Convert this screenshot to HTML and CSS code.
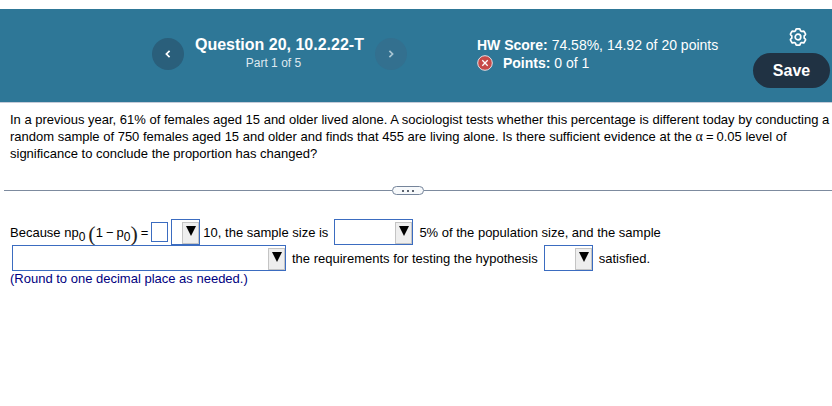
FILE: index.html
```html
<!DOCTYPE html>
<html lang="en">
<head>
    <meta charset="UTF-8">
    <meta name="viewport" content="width=device-width, initial-scale=1.0">
    <title>Question 20, 10.2.22-T</title>
    <link rel="stylesheet" href="styles.css">
</head>
<body>
    <header class="header">
        <nav class="question-nav">
            <button class="round-btn" type="button" aria-label="Previous question">
                <svg width="8" height="10" viewBox="0 0 8 10"><path d="M5.6 1.8 2.4 5l3.2 3.2" fill="none" stroke="currentColor" stroke-width="1.7"/></svg>
            </button>
            <div class="question-title">
                <h1>Question 20, 10.2.22-T</h1>
                <p>Part 1 of 5</p>
            </div>
            <button class="round-btn next" type="button" aria-label="Next question">
                <svg width="8" height="10" viewBox="0 0 8 10"><path d="M2.4 1.8 5.6 5 2.4 8.2" fill="none" stroke="currentColor" stroke-width="1.7"/></svg>
            </button>
        </nav>
        <div class="score">
            <p><b>HW Score:</b> 74.58%, 14.92 of 20 points</p>
            <p class="points">
                <svg width="16" height="16" viewBox="0 0 16 16">
                    <circle cx="8" cy="8" r="7.3" fill="#c74a48" stroke="#e6dfe4" stroke-width="1"/>
                    <path d="M5.3 5.3l5.4 5.4M10.7 5.3l-5.4 5.4" stroke="#fff" stroke-width="1.3"/>
                </svg>
                <span><b>Points:</b> 0 of 1</span>
            </p>
        </div>
        <div class="tools">
            <button class="settings" type="button" aria-label="Settings">
                <svg width="20" height="20" viewBox="0 0 20 20" fill="none" stroke="#fff" stroke-width="1.7" stroke-linejoin="round">
                    <path d="M8.6 1.8h2.8q.5 0 .7.6l.4 1.4 1.2.7 1.5-.4q.6-.1.9.4l1.4 2.4q.2.5-.2.9l-1.1 1v2.4l1.1 1q.4.4.2.9l-1.4 2.4q-.3.5-.9.4l-1.5-.4-1.2.7-.4 1.4q-.2.6-.7.6H8.6q-.5 0-.7-.6l-.4-1.4-1.2-.7-1.5.4q-.6.1-.9-.4l-1.4-2.4q-.2-.5.2-.9l1.1-1V8.800l-1.100-1q-.4-.4-.2-.9l1.400-2.400q.3-.5.9-.4l1.500.4 1.200-.7.4-1.400q.2-.6.7-.6z"/>
                    <circle cx="10" cy="10" r="2.8"/>
                </svg>
            </button>
            <button class="save" type="button">Save</button>
        </div>
    </header>

    <main>
        <p class="question">In a previous year, 61% of females aged 15 and older lived alone. A sociologist tests whether this percentage is different today by conducting a random sample of 750 females aged 15 and older and finds that 455 are living alone. Is there sufficient evidence at the <span class="alpha">α</span><span class="op">=</span>0.05 level of significance to conclude the proportion has changed?</p>

        <div class="divider">
            <button class="more" type="button" aria-label="Resize"><i></i><i></i><i></i></button>
        </div>

        <form class="answer">
            <div class="row">
                <div class="formula">
                    <span>Because np<sub>0</sub></span>
                    <span class="group"><span class="paren">(</span><span>1<span class="op">−</span>p<sub>0</sub></span><span class="paren">)</span></span>
                    <span>=</span>
                    <input class="value" type="text" aria-label="Value">
                    <span class="drop compare"><select aria-label="Comparison"><option></option></select></span>
                    <span>10, the sample size is</span>
                </div>
                <span class="drop size"><select aria-label="Sample size"><option></option></select></span>
                <span>5% of the population size, and the sample</span>
            </div>
            <div class="row">
                <span class="drop method"><select aria-label="Sampling method"><option></option></select></span>
                <span>the requirements for testing the hypothesis</span>
                <span class="drop verdict"><select aria-label="Requirements"><option></option></select></span>
                <span>satisfied.</span>
            </div>
            <p class="hint">(Round to one decimal place as needed.)</p>
        </form>
    </main>
</body>
</html>
```
FILE: styles.css
```css
* {
    box-sizing: border-box;
}

body {
    margin: 0;
    padding-top: 9px;
    background-color: #fff;
    color: #000;
    font-family: "Liberation Sans", Arial, sans-serif;
    font-size: 13px;
    line-height: 17px;
}

h1, p {
    margin: 0;
}

button {
    padding: 0;
    border: none;
    font-family: inherit;
    cursor: pointer;
}

svg {
    display: block;
}

.header {
    display: flex;
    align-items: flex-start;
    padding: 18px 2px 14px 152px;
    background-color: #2e7797;
    border-bottom: 1px solid #c5cbd8;
    color: #fff;
}

.question-nav {
    display: flex;
    align-items: center;
    gap: 11px;
    padding-top: 9px;
    margin-right: 70px;
}

.round-btn {
    display: flex;
    align-items: center;
    justify-content: center;
    width: 32px;
    height: 32px;
    border-radius: 50%;
    background-color: #2a5f7b;
    color: #fff;
}

.round-btn.next {
    background-color: #33708f;
    color: #a9c6d4;
}

.question-title {
    text-align: center;
    white-space: nowrap;
}

.question-title h1 {
    font-size: 16px;
    line-height: 18px;
}

.question-title p {
    padding-right: 12px;
    color: #dfe9f0;
    font-size: 12px;
    line-height: 18px;
}

.score {
    padding-top: 9px;
    font-size: 14px;
    line-height: 18px;
    white-space: nowrap;
}

.points {
    display: flex;
    align-items: center;
    gap: 10px;
}

.tools {
    display: flex;
    flex-direction: column;
    align-items: flex-end;
    gap: 6px;
    margin-left: auto;
}

.settings {
    margin-right: 22px;
    background: none;
}

.save {
    width: 77px;
    height: 35px;
    border-radius: 18px;
    background-color: #203243;
    color: #fff;
    font-size: 16px;
    font-weight: bold;
}

.question {
    padding: 8px 2px 0 10px;
}

.alpha {
    font-family: "Liberation Serif", "Times New Roman", serif;
    font-size: 14px;
    line-height: 1;
}

.op {
    margin: 0 3px;
}

.divider {
    display: flex;
    align-items: center;
    margin: 24px 0 24px 4px;
}

.divider::before,
.divider::after {
    content: "";
    flex: 1;
    height: 1px;
    background-color: #7d8b9f;
}

.divider::before {
    flex-grow: 19;
}

.divider::after {
    flex-grow: 20;
}

.more {
    display: flex;
    align-items: center;
    justify-content: center;
    gap: 3px;
    width: 32px;
    height: 9px;
    border: 1px solid #75849a;
    border-radius: 5px;
    background-color: #f7f9fb;
}

.more i {
    width: 2px;
    height: 2px;
    background-color: #5c6470;
}

.answer {
    padding-left: 10px;
}

.row {
    display: flex;
    align-items: center;
    gap: 6px;
    height: 26px;
    line-height: 15px;
    white-space: nowrap;
}

.formula {
    display: flex;
    align-items: center;
    gap: 3px;
}

sub {
    font-size: 12px;
    line-height: 0;
}

.group {
    display: flex;
    align-items: center;
}

.paren {
    padding-top: 2px;
    color: #222;
    font-family: "Liberation Serif", "Times New Roman", serif;
    font-size: 22px;
}

.value {
    width: 17px;
    height: 20px;
    padding: 0;
    border: 1px solid #3b6cc0;
}

.drop {
    position: relative;
    height: 26px;
}

.drop select {
    display: block;
    width: 100%;
    height: 100%;
    border: 1px solid #3b6cc0;
    border-radius: 0;
    background-color: #fff;
    appearance: none;
}

/* arrow button over the right end of the select */
.drop::after {
    content: "";
    position: absolute;
    top: 3px;
    right: 1px;
    width: 15px;
    height: 20px;
    border: 1px solid #c4c4c4;
    background-color: #eee;
    pointer-events: none;
}

.drop::before {
    content: "";
    position: absolute;
    z-index: 1;
    top: 7px;
    right: 4px;
    border: solid transparent;
    border-width: 10px 5px 0;
    border-top-color: #000;
    pointer-events: none;
}

.compare {
    width: 29px;
}

.size {
    width: 79px;
}

.method {
    width: 274px;
    margin-left: 2px;
}

.verdict {
    width: 49px;
}

.hint {
    color: #000080;
    line-height: 16px;
}
```
